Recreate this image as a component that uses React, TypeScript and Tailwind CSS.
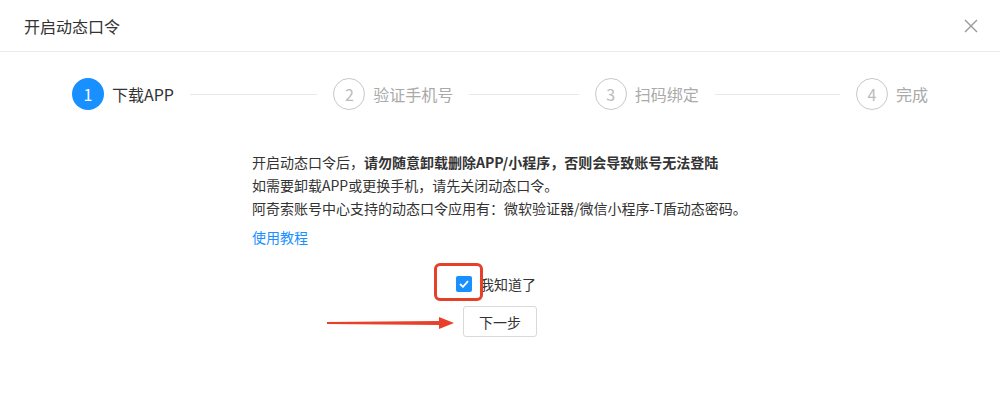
import React from "react";

const font = { fontFamily: '"Noto Sans CJK SC", "Noto Sans", sans-serif' };

function Circle({ n, active }: { n: number; active?: boolean }) {
  return active ? (
    <div className="w-8 h-8 shrink-0 rounded-full bg-[#1890ff] text-white flex items-center justify-center text-[16px] leading-none">
      {n}
    </div>
  ) : (
    <div className="w-8 h-8 shrink-0 rounded-full border border-[#c8c8c8] text-[#bcbcbc] flex items-center justify-center text-[16px] leading-none">
      {n}
    </div>
  );
}

function Step({ n, title, active, first, last }: { n: number; title: string; active?: boolean; first?: boolean; last?: boolean }) {
  return (
    <div className={`${last ? "flex-none" : "flex-1 basis-0 min-w-0"} ${first ? "" : "pl-4"} flex items-center overflow-hidden`}>
      <Circle n={n} active={active} />
      <span className={`ml-2 text-[16px] leading-[24px] whitespace-nowrap ${active ? "text-[#333]" : "text-[#aaa]"}`}>{title}</span>
      {!last && <div className="ml-4 flex-1 h-px bg-[#e8e8e8]" />}
    </div>
  );
}

export default function App() {
  return (
    <div className="w-[1000px] h-[410px] bg-white relative overflow-hidden" style={font}>
      <div className="h-[52px] border-b border-[#ebebeb] flex items-center justify-between pl-6 pr-[21px]">
        <span className="text-[16px] text-[#333] leading-none">开启动态口令</span>
        <svg width="16" height="16" viewBox="0 0 16 16">
          <path d="M2 2 L14 14 M14 2 L2 14" stroke="#999" strokeWidth="1.4" />
        </svg>
      </div>

      <div className="mx-[72px] mt-[26px] flex items-center">
        <Step n={1} title="下载APP" active first />
        <Step n={2} title="验证手机号" />
        <Step n={3} title="扫码绑定" />
        <Step n={4} title="完成" last />
      </div>

      <div className="w-[496px] mx-auto mt-[41px] text-[14px] leading-[23px] text-[#333]">
        <p>
          开启动态口令后，<span className="font-bold">请勿随意卸载删除APP/小程序，否则会导致账号无法登陆</span>
        </p>
        <p>如需要卸载APP或更换手机，请先关闭动态口令。</p>
        <p>阿奇索账号中心支持的动态口令应用有：微软验证器/微信小程序-T盾动态密码。</p>
        <p className="mt-[6px] text-[#1890ff]">使用教程</p>
      </div>

      <div className="mt-[24px] flex justify-center">
        <div className="flex items-center relative">
          <div className="absolute left-[-22px] top-[-10px] w-[49px] h-[38px] border-[3px] border-[#e5402a] rounded-[6px]" />
          <div className="w-4 h-4 rounded-[2px] bg-[#1890ff] flex items-center justify-center">
            <svg width="10" height="8" viewBox="0 0 10 8">
              <path d="M1 4 L4 6.8 L9 1.2" stroke="white" strokeWidth="1.8" fill="none" />
            </svg>
          </div>
          <span className="ml-2 pr-2 text-[14px] leading-[22px] text-[#333]">我知道了</span>
        </div>
      </div>

      <div className="mt-[11px] flex justify-center">
        <div className="relative">
          <svg className="absolute right-full mr-2 top-[10px]" width="128" height="14" viewBox="0 0 128 14">
            <polygon points="0,6 112,5 112,1 127,7 112,13 112,9 0,8" fill="#e8412b" />
          </svg>
          <button className="w-[74px] h-[31px] border border-[#d9d9d9] rounded-[3px] bg-white text-[14px] text-[#333] leading-none">
            下一步
          </button>
        </div>
      </div>
    </div>
  );
}
